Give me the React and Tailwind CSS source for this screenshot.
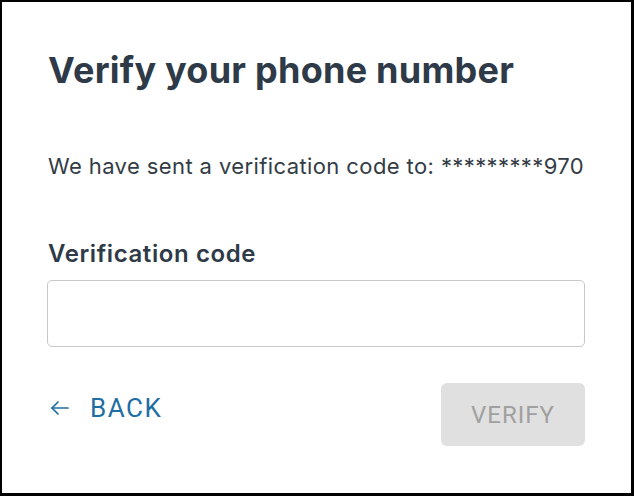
import React, { useState } from "react";

export default function App() {
  const [code, setCode] = useState("");

  return (
    <div className="w-[634px] h-[496px] bg-white border-black border-t-2 border-l-2 border-r-[3px] border-b-[3px] font-['Inter',sans-serif]">
      <div className="pl-[46px] pr-[46px] pt-[44px]">
        <h1 className="text-[36px] leading-[48px] font-bold text-[#2e3a47] tracking-[0.25px]">
          Verify your phone number
        </h1>

        <p className="mt-[57px] text-[22px] leading-[30px] text-[#333c45] tracking-[0.4px]">
          We have sent a verification code to: *********970
        </p>

        <label className="block mt-[58px] text-[24px] leading-[30px] font-semibold text-[#2e3a47] tracking-[0.6px]">
          Verification code
        </label>
        <input
          type="text"
          value={code}
          onChange={(e) => setCode(e.target.value)}
          className="mt-[11px] block w-[538px] h-[67px] -ml-px rounded-[5px] border border-[#c8c8c8] px-4 text-[20px] outline-none"
        />

        <div className="mt-[36px] flex items-center justify-between w-[537px] font-['Roboto',sans-serif]">
          <button className="flex items-center gap-[18px] text-[#1f6ea3] text-[26px] tracking-[1.5px] -mt-[13px]">
            <svg width="24" height="24" viewBox="0 0 24 24" fill="none" stroke="currentColor" strokeWidth="1.7" strokeLinecap="round" strokeLinejoin="round">
              <path d="M20 12H4" />
              <path d="M10 6l-6 6 6 6" />
            </svg>
            <span>BACK</span>
          </button>
          <button
            disabled
            className="w-[144px] h-[63px] rounded-[6px] bg-[#e0e0e0] text-[#a0a0a0] text-[24px] tracking-[1px]"
          >
            VERIFY
          </button>
        </div>
      </div>
    </div>
  );
}
